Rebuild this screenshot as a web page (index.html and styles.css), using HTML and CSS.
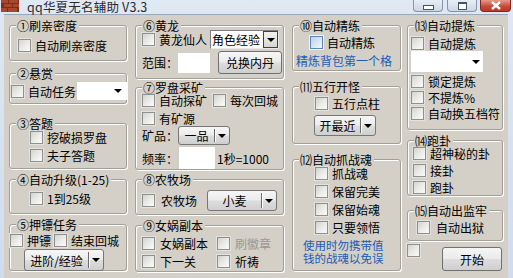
FILE: index.html
```html
<!DOCTYPE html>
<html lang="zh-CN">
<head>
    <meta charset="UTF-8">
    <title>qq华夏无名辅助 V3.3</title>
    <link rel="stylesheet" href="styles.css">
</head>
<body>
    <div class="window">
        <div class="titlebar">
            <svg class="app-icon" width="18" height="12" viewBox="0 0 18 12">
                <rect width="18" height="12" fill="#7a2e1e"/>
                <g fill="#a8472e">
                    <rect x="0" y="0" width="7" height="3"/>
                    <rect x="8" y="0" width="9" height="3"/>
                    <rect x="3" y="4" width="8" height="3"/>
                    <rect x="12" y="4" width="6" height="3"/>
                    <rect x="0" y="8" width="6" height="4"/>
                    <rect x="7" y="8" width="9" height="4"/>
                </g>
            </svg>
            <span class="title">qq华夏无名辅助 V3.3</span>
            <div class="caption-btns">
                <div class="cap-btn"><span class="ico-min"></span></div>
                <div class="cap-btn"><span class="ico-max"></span></div>
                <div class="cap-btn close">
                    <svg width="12" height="9" viewBox="0 0 12 9"><path d="M2 1 L10 8 M10 1 L2 8" stroke="#fff" stroke-width="2.4"/></svg>
                </div>
            </div>
        </div>

        <div class="client">
            <!-- column 1 -->
            <div class="col col-1">
                <div class="group g1">
                    <span class="legend">①刷亲密度</span>
                    <div class="row"><span class="cb"></span>自动刷亲密度</div>
                </div>
                <div class="group g2">
                    <span class="legend">②悬赏</span>
                    <div class="row tall">
                        <span class="cb"></span>自动任务
                        <div class="dd-flat"><span class="tri"></span></div>
                    </div>
                </div>
                <div class="group g3">
                    <span class="legend">③答题</span>
                    <div class="row"><span class="cb"></span>挖破损罗盘</div>
                    <div class="row"><span class="cb"></span>夫子答题</div>
                </div>
                <div class="group g4">
                    <span class="legend">④自动升级(1-25)</span>
                    <div class="row"><span class="cb"></span>1到25级</div>
                </div>
                <div class="group g5">
                    <span class="legend">⑤押镖任务</span>
                    <div class="row"><span class="cb"></span>押镖<span class="cb next"></span>结束回城</div>
                    <div class="combo-btn escort"><span class="val">进阶/经验</span><span class="sep"></span><span class="arr"><span class="tri"></span></span></div>
                </div>
            </div>

            <!-- column 2 -->
            <div class="col col-2">
                <div class="group g6">
                    <span class="legend">⑥黄龙</span>
                    <div class="row r19">
                        <span class="cb"></span>黄龙仙人
                        <div class="dd-field"><span class="val">角色经验</span><span class="dd-arrow"><span class="tri"></span></span></div>
                    </div>
                    <div class="row r23">
                        范围：<span class="input range"></span>
                        <span class="btn exchange">兑换内丹</span>
                    </div>
                </div>
                <div class="group g7">
                    <span class="legend">⑦罗盘采矿</span>
                    <div class="row"><span class="cb"></span>自动探矿<span class="cb next-wide"></span>每次回城</div>
                    <div class="row"><span class="cb"></span>有矿源</div>
                    <div class="row r19">
                        矿品：<div class="combo-btn grade"><span class="val">一品</span><span class="sep"></span><span class="arr"><span class="tri"></span></span></div>
                    </div>
                    <div class="row r22">
                        频率：<span class="input freq"></span><span class="hint">1秒=1000</span>
                    </div>
                </div>
                <div class="group g8">
                    <span class="legend">⑧农牧场</span>
                    <div class="row r21">
                        <span class="cb wide"></span>农牧场
                        <div class="combo-btn crop"><span class="val">小麦</span><span class="sep"></span><span class="arr"><span class="tri"></span></span></div>
                    </div>
                </div>
                <div class="group g9">
                    <span class="legend">⑨女娲副本</span>
                    <div class="grid2">
                        <div class="row"><span class="cb"></span>女娲副本</div>
                        <div class="row disabled"><span class="cb"></span>刷徽章</div>
                        <div class="row"><span class="cb"></span>下一关</div>
                        <div class="row"><span class="cb"></span>祈祷</div>
                    </div>
                </div>
            </div>

            <!-- column 3 -->
            <div class="col col-3">
                <div class="group g10">
                    <span class="legend">⑩自动精练</span>
                    <div class="row"><span class="cb hot"></span>自动精炼</div>
                    <div class="note">精炼背包第一个格</div>
                </div>
                <div class="group g11">
                    <span class="legend">⑾五行开怪</span>
                    <div class="row"><span class="cb"></span>五行点柱</div>
                    <div class="combo-btn nearest"><span class="val">开最近</span><span class="sep"></span><span class="arr"><span class="tri"></span></span></div>
                </div>
                <div class="group g12">
                    <span class="legend">⑿自动抓战魂</span>
                    <div class="row"><span class="cb"></span>抓战魂</div>
                    <div class="row"><span class="cb"></span>保留完美</div>
                    <div class="row"><span class="cb"></span>保留始魂</div>
                    <div class="row"><span class="cb"></span>只要领悟</div>
                    <div class="note warn">使用时勿携带值<br>钱的战魂以免误</div>
                </div>
            </div>

            <!-- column 4 -->
            <div class="col col-4">
                <div class="group g13">
                    <span class="legend">⒀自动提炼</span>
                    <div class="row"><span class="cb"></span>自动提炼</div>
                    <div class="dd-flat refine"><span class="tri"></span></div>
                    <div class="row lock"><span class="cb"></span>锁定提炼</div>
                    <div class="row"><span class="cb"></span>不提炼%</div>
                    <div class="row"><span class="cb"></span>自动换五档符</div>
                </div>
                <div class="group g14">
                    <span class="legend">⒁跑卦</span>
                    <div class="row"><span class="cb"></span>超神秘的卦</div>
                    <div class="row"><span class="cb"></span>接卦</div>
                    <div class="row"><span class="cb"></span>跑卦</div>
                </div>
                <div class="group g15">
                    <span class="legend">⒂自动出监牢</span>
                    <div class="row"><span class="cb wide"></span>自动出狱</div>
                </div>
                <div class="footer">
                    <span class="cb"></span>
                    <span class="btn start">开始</span>
                </div>
            </div>
        </div>
    </div>
</body>
</html>
```

FILE: styles.css
```css
body {
    margin: 0;
    background: #d9e4f1;
    font-family: "Noto Sans CJK SC", "DejaVu Sans", sans-serif;
    font-size: 12px;
    color: #000;
    overflow: hidden;
}

.window {
    width: 513px;
    height: 278px;
    padding: 0 5px 0 4px;
    box-sizing: border-box;
    background: linear-gradient(#dfe8f3, #cfdced);
}

/* title bar */
.titlebar {
    height: 14px;
    display: flex;
    align-items: flex-start;
    margin-left: -4px;
    margin-right: -5px;
    position: relative;
}

.app-icon {
    margin-left: 1px;
    flex: none;
}

.title {
    margin-left: 8px;
    font-size: 12.5px;
    line-height: 14px;
    color: #2b2b2b;
    letter-spacing: 0.2px;
}

.caption-btns {
    position: absolute;
    top: 0;
    left: 413px;
    display: flex;
    gap: 4px;
}

.cap-btn {
    width: 30px;
    height: 12px;
    box-sizing: border-box;
    border: 1px solid #8394ab;
    border-top: none;
    border-radius: 0 0 4px 4px;
    background: linear-gradient(#e8eef6, #cbd7e6);
    display: flex;
    align-items: center;
    justify-content: center;
}

.cap-btn + .cap-btn.close {
    margin-left: -1px;
}

.cap-btn.close {
    width: 31px;
    border-color: #7a2a22;
    background: linear-gradient(#e59a8c, #c74735 60%, #b93a28);
}

.ico-min {
    width: 9px;
    height: 3px;
    margin-top: 3px;
    background: #fff;
    border: 1px solid #445566;
}

.ico-max {
    width: 7px;
    height: 5px;
    border: 1px solid #445566;
    border-top-width: 2px;
    background: #fff;
}

/* client area */
.client {
    height: 264px;
    background: #d4d0c8;
    border-top: 1px solid #9aa7b8;
    display: flex;
    padding-left: 5px;
    padding-top: 10px;
    box-sizing: border-box;
}

.col {
    display: flex;
    flex-direction: column;
    flex: none;
}

.col-1 { width: 118px; }
.col-2 { width: 149px; margin-left: 8px; }
.col-3 { width: 109px; margin-left: 8px; }
.col-4 { width: 96px; margin-left: 6px; }

.group {
    position: relative;
    box-sizing: border-box;
    border: 1px solid #a29f98;
    border-radius: 3px;
    box-shadow: inset 1px 1px 0 #fff, 1px 1px 0 #fff;
    display: flex;
    flex-direction: column;
    align-items: flex-start;
    flex: none;
}

.legend {
    position: absolute;
    top: -7px;
    left: 6px;
    padding: 0 2px 0 1px;
    background: #d4d0c8;
    line-height: 13px;
    white-space: nowrap;
}

.row {
    display: flex;
    align-items: center;
    height: 13px;
    line-height: 13px;
    white-space: nowrap;
}

.row.tall { height: 18px; }
.r19 { height: 19px; }
.r21 { height: 21px; }
.r22 { height: 22px; }
.r23 { height: 23px; }

.cb {
    width: 13px;
    height: 13px;
    box-sizing: border-box;
    flex: none;
    margin-right: 4px;
    border: 1px solid #8e8f8f;
    background: linear-gradient(135deg, #d3d3cf 0%, #ecece9 55%, #fbfbfa 100%);
    box-shadow: 0 0 0 1px #e4e2dc;
}

.cb.wide { margin-right: 6px; }
.cb.next { margin-left: 3px; }
.cb.next-wide { margin-left: 6px; }

.cb.hot {
    border-color: #5c86b8;
    background: linear-gradient(135deg, #b9d2ee 0%, #dbe8f7 60%, #f2f7fd 100%);
    box-shadow: 0 0 0 1px #f0f4f8;
}

.disabled {
    color: #9a9893;
}

.tri {
    width: 0;
    height: 0;
    border-left: 4px solid transparent;
    border-right: 4px solid transparent;
    border-top: 4px solid #000;
}

/* white dropdown without frame */
.dd-flat {
    width: 50px;
    height: 18px;
    margin-left: 1px;
    background: #fff;
    display: flex;
    align-items: center;
    justify-content: flex-end;
    padding-right: 5px;
    box-sizing: border-box;
}

/* white dropdown with arrow button */
.dd-field {
    width: 69px;
    height: 19px;
    margin-left: 3px;
    box-sizing: border-box;
    display: flex;
    background: #fff;
    border: 1px solid #7f7f7f;
    border-right-color: #e8e8e8;
    border-bottom-color: #e8e8e8;
}

.dd-field .val {
    flex: 1;
    line-height: 17px;
    padding-left: 1px;
}

.dd-arrow {
    width: 15px;
    box-sizing: border-box;
    border: 1px solid #404040;
    background: linear-gradient(#f2f2f0, #d8d6d0);
    display: flex;
    align-items: center;
    justify-content: center;
}

/* button-like combo */
.combo-btn {
    display: flex;
    align-items: center;
    box-sizing: border-box;
    border: 1px solid #767676;
    border-radius: 3px;
    background: linear-gradient(#f6f6f6, #ebebeb 48%, #dddddd 52%, #cfcfcf);
    flex: none;
}

.combo-btn .val {
    flex: 1;
    text-align: center;
    line-height: 13px;
}

.combo-btn .sep {
    width: 1px;
    align-self: stretch;
    margin: 2px 0;
    background: #6a6a6a;
    box-shadow: 1px 0 0 #fff;
}

.combo-btn .arr {
    width: 14px;
    display: flex;
    justify-content: center;
}

.btn {
    display: flex;
    align-items: center;
    justify-content: center;
    box-sizing: border-box;
    border: 1px solid #707070;
    border-radius: 3px;
    background: linear-gradient(#f6f6f6, #ebebeb 48%, #dddddd 52%, #cfcfcf);
    flex: none;
}

.input {
    background: #fff;
    flex: none;
}

.note {
    color: #1c5cb5;
    line-height: 13px;
    white-space: nowrap;
}

/* column 1 */
.g1 { height: 36px; padding: 13px 0 0 8px; }
.g2 { height: 31px; margin-top: 12px; padding: 8px 0 0 1px; }
.g3 { height: 46px; margin-top: 19px; padding: 7px 0 0 20px; gap: 5px; }
.g4 { height: 35px; margin-top: 10px; padding: 12px 0 0 20px; }
.g5 { height: 47px; margin-top: 10px; padding: 9px 0 0 0; }

.escort {
    width: 80px;
    height: 22px;
    margin: 2px 0 0 14px;
}

/* column 2 */
.g6 { height: 54px; padding: 4px 0 0 6px; }
.g6 .r23 { margin-top: 2px; }

.range {
    width: 32px;
    height: 20px;
}

.exchange {
    width: 64px;
    height: 23px;
    margin-left: 8px;
}

.g7 { height: 83px; margin-top: 8px; padding: 6px 0 0 6px; }
.g7 .row + .row { margin-top: 5px; }
.g7 .r19 { margin-top: 1px !important; }
.g7 .r22 { margin-top: 2px !important; }

.grade {
    width: 52px;
    height: 19px;
}

.freq {
    width: 36px;
    height: 22px;
    margin-left: 1px;
}

.hint {
    margin-left: 2px;
}

.g8 { height: 36px; margin-top: 9px; padding: 10px 0 0 6px; }

.crop {
    width: 70px;
    height: 21px;
    margin-left: 10px;
}

.g9 { height: 47px; margin-top: 10px; padding: 11px 0 0 6px; }

.grid2 {
    display: grid;
    grid-template-columns: 75px auto;
    row-gap: 5px;
}

.g9 .cb { margin-right: 5px; }

/* column 3 */
.g10 { height: 46px; padding: 10px 0 0 17px; }
.g10 .note { margin: 5px 0 0 -14px; }

.g11 { height: 58px; margin-top: 15px; padding: 10px 0 0 22px; }

.nearest {
    width: 62px;
    height: 21px;
    margin: 5px 0 0 -1px;
}

.g12 { height: 112px; margin-top: 15px; padding: 7px 0 0 22px; gap: 5px; }
.g12 .note.warn {
    margin: 0 0 0 -12px;
    font-size: 11.5px;
    line-height: 13px;
}

/* column 4 */
.g13 { height: 105px; padding: 11px 0 0 3px; }
.refine {
    width: 72px;
    height: 21px;
    margin: 1px 0 0 0;
    padding-right: 3px;
}
.g13 .lock { margin-top: 3px; }
.g13 .lock ~ .row { margin-top: 3px; }

.g14 { height: 56px; margin-top: 10px; padding: 6px 0 0 5px; gap: 4px; }
.g15 { height: 31px; margin-top: 14px; padding: 10px 0 0 9px; }

.footer {
    display: flex;
    align-items: flex-start;
    margin-top: 3px;
}

.start {
    width: 60px;
    height: 24px;
    margin: 3px 0 0 18px;
}
```
